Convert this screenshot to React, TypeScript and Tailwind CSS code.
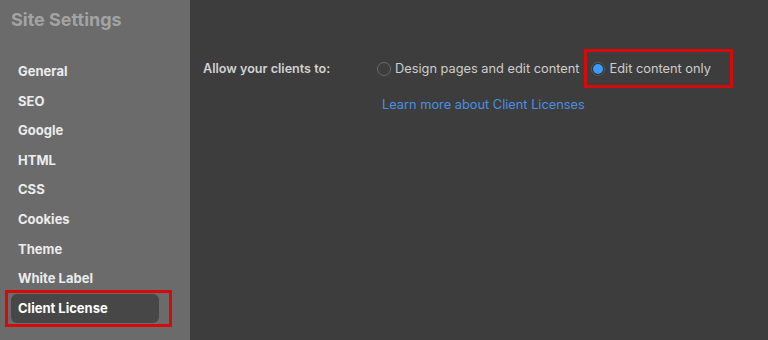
const navItems = [
  "General",
  "SEO",
  "Google",
  "HTML",
  "CSS",
  "Cookies",
  "Theme",
  "White Label",
  "Client License",
];

function Radio({ checked }: { checked?: boolean }) {
  return (
    <span
      className={
        checked
          ? "flex h-[14px] w-[14px] shrink-0 items-center justify-center rounded-full border border-[#5a5a5a] bg-[#2f2f2f]"
          : "h-[14px] w-[14px] shrink-0 rounded-full border border-[#6a6a6a]"
      }
    >
      {checked && <span className="h-[10px] w-[10px] rounded-full bg-[#3b9bf6]" />}
    </span>
  );
}

export default function App() {
  return (
    <div className="flex h-[340px] w-[768px] overflow-hidden bg-[#3d3d3d] font-['Inter',sans-serif]">
      {/* Sidebar */}
      <aside className="flex w-[190px] shrink-0 flex-col bg-[#6b6b6b]">
        <h1 className="pl-[11px] pt-[8px] text-[18px] font-bold leading-[24px] text-[#a3a3a3]">
          Site Settings
        </h1>
        <nav className="mt-[25px] flex flex-col">
          {navItems.map((item) => {
            const active = item === "Client License";
            return (
              <div key={item} className="relative flex h-[29.6px] items-center px-[11px]">
                {active ? (
                  <>
                    <div className="flex h-[29px] w-[148px] items-center rounded-md bg-[#474747] pl-[7px] text-[13px] font-bold text-white">
                      {item}
                    </div>
                    <div className="pointer-events-none absolute left-[5px] top-[-4px] h-[37px] w-[167px] border-[3px] border-[#d50b0b]" />
                  </>
                ) : (
                  <span className="pl-[7px] text-[13px] font-bold text-[#ececec]">{item}</span>
                )}
              </div>
            );
          })}
        </nav>
      </aside>

      {/* Main */}
      <main className="flex-1 pl-[13px] pt-[58px] text-[12.8px]">
        <div className="flex h-[22px] items-center">
          <span className="w-[174px] shrink-0 text-[12.6px] font-semibold text-[#d2d2d2]">Allow your clients to:</span>
          <label className="flex items-center gap-[4px] text-[#cdcdcd]">
            <Radio />
            Design pages and edit content
          </label>
          <label className="relative ml-[11px] flex items-center gap-[5px] text-[#cdcdcd]">
            <Radio checked />
            Edit content only
            <span className="pointer-events-none absolute left-[-7px] top-[-10px] h-[39px] w-[149px] border-[3px] border-[#d50b0b]" />
          </label>
        </div>
        <div className="mt-[15px] pl-[179px]">
          <a className="text-[#4a90e0]">Learn more about Client Licenses</a>
        </div>
      </main>
    </div>
  );
}
